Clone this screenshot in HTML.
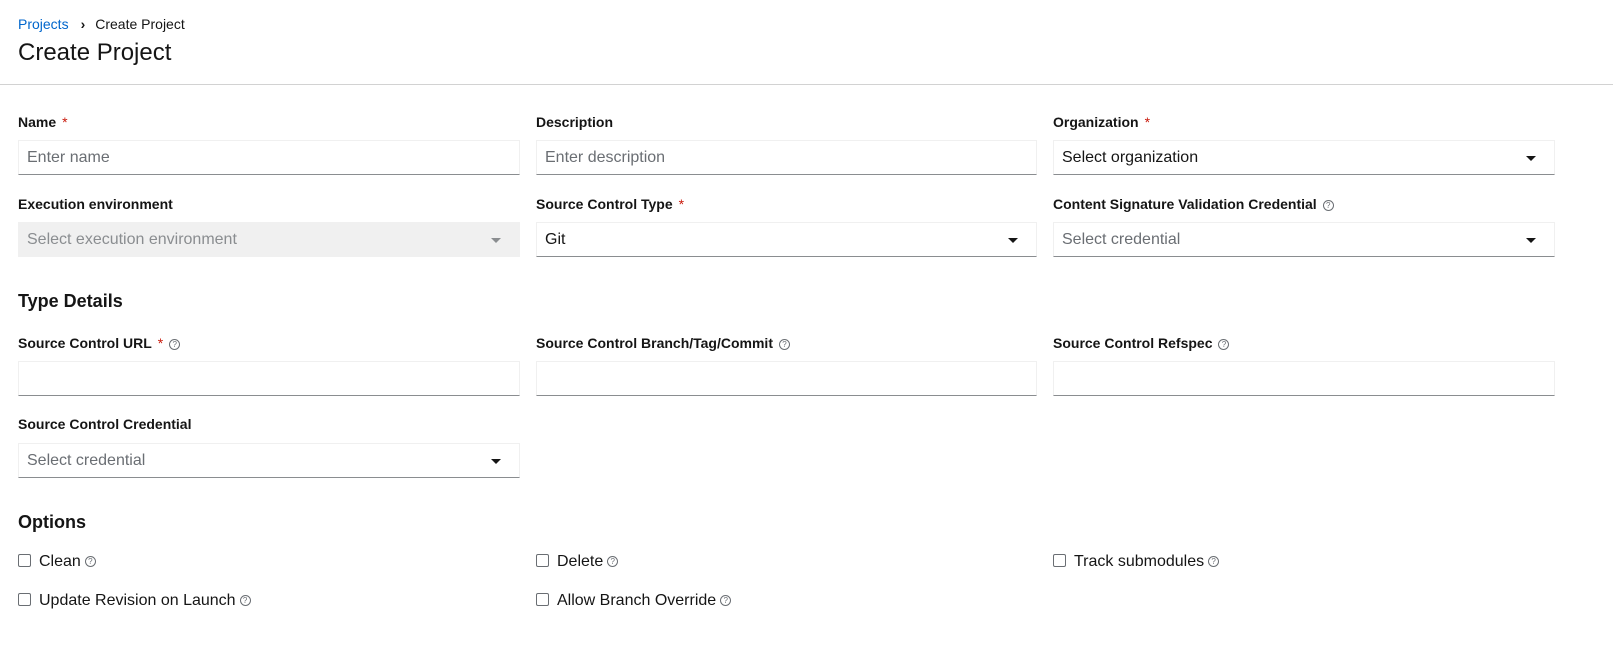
<!DOCTYPE html>
<html><head><meta charset="utf-8"><style>
*{box-sizing:border-box;margin:0;padding:0}
body{width:1613px;height:656px;background:#fff;font-family:"Liberation Sans",sans-serif;color:#151515;position:relative;overflow:hidden}
.a{position:absolute;white-space:nowrap}
.lbl{font-size:14px;font-weight:bold;line-height:18px}
.req{color:#c9190b;margin-left:6px;font-weight:normal}
.inp{position:absolute;height:35px;border:1px solid #f0f0f0;border-bottom-color:#8a8d90;font-size:16px;line-height:33px;padding-left:8px;color:#6a6e73}
.dis{background:#f0f0f0;border-color:#f0f0f0;color:#8a8d90}
.car{position:absolute;right:18px;top:15px;width:0;height:0;border-left:5px solid transparent;border-right:5px solid transparent;border-top:5px solid #151515}
.dis .car{border-top-color:#8a8d90}
.q{display:inline-block;width:11px;height:11px;border:1px solid #6a6e73;border-radius:50%;font-size:8px;line-height:9px;text-align:center;color:#6a6e73;font-weight:normal;vertical-align:middle;margin-left:6px}
.h{font-size:18px;font-weight:bold;line-height:22px}
.cb{position:absolute;font-size:16px;line-height:20px}
.cb i{display:inline-block;width:13px;height:13px;border:1px solid #6a6e73;border-radius:2px;vertical-align:-1px;margin-right:8px}
.cb .q{margin-left:4px}
</style></head><body>
<div class="a" style="left:18px;top:15px;font-size:14px;line-height:18px"><span style="color:#06c">Projects</span><span style="margin:0 10px 0 12px;font-weight:bold">›</span>Create Project</div>
<div class="a" style="left:18px;top:38px;font-size:24px;line-height:30px">Create Project</div>
<div class="a" style="left:0;top:84px;width:1613px;height:1px;background:#d2d2d2"></div>

<div class="a lbl" style="left:18px;top:113px">Name<span class="req">*</span></div>
<div class="a lbl" style="left:536px;top:113px">Description</div>
<div class="a lbl" style="left:1053px;top:113px">Organization<span class="req">*</span></div>
<div class="inp" style="left:18px;top:140px;width:502px">Enter name</div>
<div class="inp" style="left:536px;top:140px;width:501px">Enter description</div>
<div class="inp" style="left:1053px;top:140px;width:502px;color:#151515">Select organization<span class="car"></span></div>

<div class="a lbl" style="left:18px;top:195px">Execution environment</div>
<div class="a lbl" style="left:536px;top:195px">Source Control Type<span class="req">*</span></div>
<div class="a lbl" style="left:1053px;top:195px">Content Signature Validation Credential<span class="q">?</span></div>
<div class="inp dis" style="left:18px;top:222px;width:502px">Select execution environment<span class="car"></span></div>
<div class="inp" style="left:536px;top:222px;width:501px;color:#151515">Git<span class="car"></span></div>
<div class="inp" style="left:1053px;top:222px;width:502px">Select credential<span class="car"></span></div>

<div class="a h" style="left:18px;top:290px">Type Details</div>

<div class="a lbl" style="left:18px;top:334px">Source Control URL<span class="req">*</span><span class="q">?</span></div>
<div class="a lbl" style="left:536px;top:334px">Source Control Branch/Tag/Commit<span class="q">?</span></div>
<div class="a lbl" style="left:1053px;top:334px">Source Control Refspec<span class="q">?</span></div>
<div class="inp" style="left:18px;top:361px;width:502px"></div>
<div class="inp" style="left:536px;top:361px;width:501px"></div>
<div class="inp" style="left:1053px;top:361px;width:502px"></div>

<div class="a lbl" style="left:18px;top:415px">Source Control Credential</div>
<div class="inp" style="left:18px;top:443px;width:502px">Select credential<span class="car"></span></div>

<div class="a h" style="left:18px;top:511px">Options</div>
<div class="cb" style="left:18px;top:552px"><i></i>Clean<span class="q">?</span></div>
<div class="cb" style="left:536px;top:552px"><i></i>Delete<span class="q">?</span></div>
<div class="cb" style="left:1053px;top:552px"><i></i>Track submodules<span class="q">?</span></div>
<div class="cb" style="left:18px;top:591px"><i></i>Update Revision on Launch<span class="q">?</span></div>
<div class="cb" style="left:536px;top:591px"><i></i>Allow Branch Override<span class="q">?</span></div>
</body></html>
